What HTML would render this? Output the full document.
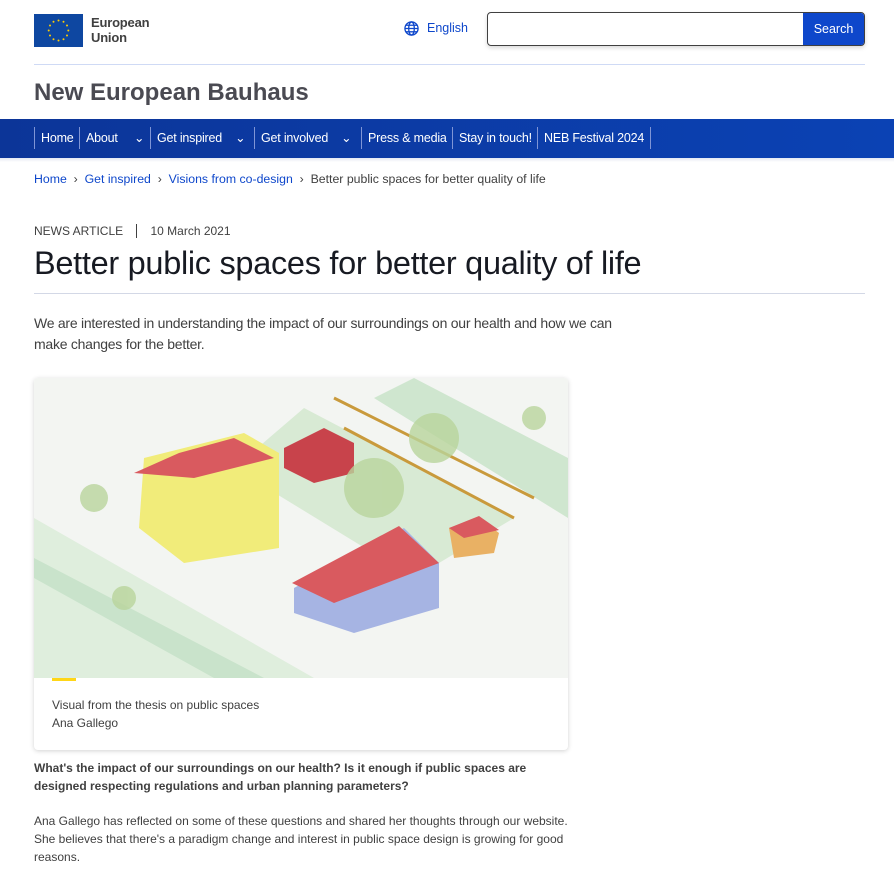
<!DOCTYPE html>
<html><head><meta charset="utf-8"><style>
*{margin:0;padding:0;box-sizing:border-box}
body{width:894px;height:879px;overflow:hidden;background:#fff;font-family:"Liberation Sans",Arial,sans-serif;color:#404040;position:relative}
.abs{position:absolute}
a{color:#0e47cb;text-decoration:none}
.nav span{position:absolute;top:0;height:22px;border-left:1px solid #7f95d6;color:#fff;font-size:12.5px;line-height:22px;padding-left:6px;letter-spacing:-.2px}
</style></head><body>
<div class="abs" style="left:34px;top:14px;width:49px;height:33px;background:#0e47a1">
<svg width="49" height="33"><g fill="#ffcc00">
<circle cx="24.5" cy="6.5" r="1"/><circle cx="29.5" cy="7.8" r="1"/><circle cx="33" cy="11.5" r="1"/><circle cx="34.3" cy="16.5" r="1"/><circle cx="33" cy="21.5" r="1"/><circle cx="29.5" cy="25.2" r="1"/><circle cx="24.5" cy="26.5" r="1"/><circle cx="19.5" cy="25.2" r="1"/><circle cx="16" cy="21.5" r="1"/><circle cx="14.7" cy="16.5" r="1"/><circle cx="16" cy="11.5" r="1"/><circle cx="19.5" cy="7.8" r="1"/></g></svg></div>
<div class="abs" style="left:91px;top:15px;font-size:13px;line-height:15px;color:#404040;font-weight:bold;letter-spacing:-.2px">European<br>Union</div>
<svg class="abs" style="left:404px;top:21px" width="15" height="15" viewBox="0 0 16 16" fill="none" stroke="#0e47cb" stroke-width="1.4"><circle cx="8" cy="8" r="7"/><ellipse cx="8" cy="8" rx="3" ry="7"/><path d="M1 8h14M2 4.5h12M2 11.5h12"/></svg>
<div class="abs" style="left:427px;top:21px;font-size:12.5px;color:#0e47cb">English</div>
<div class="abs" style="left:487px;top:12px;width:378px;height:34px;border:1px solid #404040;border-radius:4px;overflow:hidden;box-shadow:0 2px 4px rgba(0,0,0,.15)">
<div class="abs" style="right:0;top:0;width:61px;height:34px;background:#0e47cb;color:#fff;font-size:12.5px;line-height:32px;text-align:center">Search</div></div>
<div class="abs" style="left:34px;top:64px;width:831px;height:1px;background:#cfdaf5"></div>
<div class="abs" style="left:34px;top:79px;font-size:24px;font-weight:bold;color:#4a4a52">New European Bauhaus</div>
<div class="abs nav" style="left:0;top:119px;width:894px;height:39px;background:linear-gradient(90deg,#0c3598,#0b42b4)">
<div style="position:relative;top:8px">
<span style="left:34px">Home</span><span style="left:79px">About&nbsp;&nbsp;&nbsp;&nbsp;&nbsp;⌄</span><span style="left:150px">Get inspired&nbsp;&nbsp;&nbsp;&nbsp;⌄</span><span style="left:254px">Get involved&nbsp;&nbsp;&nbsp;&nbsp;⌄</span><span style="left:361px">Press &amp; media</span><span style="left:452px">Stay in touch!</span><span style="left:537px;border-right:1px solid #7f95d6;padding-right:6px">NEB Festival 2024</span>
</div></div>
<div class="abs" style="left:0;top:158px;width:894px;height:4px;background:linear-gradient(#e4e8f3,#fff)"></div>
<div class="abs" style="left:34px;top:172px;font-size:12.3px;color:#404040"><a>Home</a>&nbsp;&nbsp;›&nbsp;&nbsp;<a>Get inspired</a>&nbsp;&nbsp;›&nbsp;&nbsp;<a>Visions from co-design</a>&nbsp;&nbsp;›&nbsp;&nbsp;Better public spaces for better quality of life</div>
<div class="abs" style="left:34px;top:224px;font-size:12px;color:#404040">NEWS ARTICLE&nbsp;&nbsp;&nbsp;&nbsp;<span style="border-left:1px solid #404040;padding-left:13px">10 March 2021</span></div>
<div class="abs" style="left:34px;top:245px;font-size:32.5px;color:#171a22;letter-spacing:-.3px">Better public spaces for better quality of life</div>
<div class="abs" style="left:34px;top:293px;width:831px;height:1px;background:#d3d8e6"></div>
<div class="abs" style="left:34px;top:313px;width:600px;font-size:14px;line-height:21px;color:#404040;letter-spacing:-.25px">We are interested in understanding the impact of our surroundings on our health and how we can make changes for the better.</div>
<div class="abs" style="left:34px;top:378px;width:534px;height:372px;border-radius:4px;box-shadow:0 1px 5px rgba(0,0,0,.18);overflow:hidden">
<svg width="534" height="300" style="display:block;background:#f3f5f2">
<polygon points="0,520 0,140 280,300 200,300" fill="#dfeedd"/>
<polygon points="0,180 230,300 180,300 0,200" fill="#c9e3cb"/>
<polygon points="380,0 534,80 534,140 340,20" fill="#cfe6cf"/>
<polygon points="270,30 480,140 380,200 200,90" fill="#d8ead4"/>
<polygon points="110,80 210,55 245,75 245,170 150,185 105,150" fill="#f1ec7a"/>
<polygon points="100,95 145,75 200,60 240,80 160,100" fill="#d95a5f"/>
<polygon points="250,70 290,50 320,65 320,95 280,105 250,90" fill="#c8434b"/>
<polygon points="260,210 370,150 405,185 405,230 320,255 260,235" fill="#a6b4e3"/>
<polygon points="258,205 365,148 405,185 300,225" fill="#d95a5f"/>
<polygon points="415,150 445,140 465,155 460,175 420,180" fill="#e9b164"/>
<polygon points="415,150 445,138 465,152 430,160" fill="#d95a5f"/>
<path d="M300 20 L500 120 M310 50 L480 140" stroke="#c99a3c" stroke-width="3" fill="none"/>
<g fill="#b9d59c" opacity=".8"><circle cx="340" cy="110" r="30"/><circle cx="400" cy="60" r="25"/><circle cx="60" cy="120" r="14"/><circle cx="500" cy="40" r="12"/><circle cx="90" cy="220" r="12"/></g>
</svg>
<div class="abs" style="left:18px;top:300px;width:24px;height:3px;background:#ffd617"></div>
<div class="abs" style="left:18px;top:318px;font-size:12px;line-height:18px;color:#404040">Visual from the thesis on public spaces<br>Ana Gallego</div>
</div>
<div class="abs" style="left:34px;top:759px;width:534px;font-size:12px;line-height:18px;font-weight:bold;color:#404040">What's the impact of our surroundings on our health? Is it enough if public spaces are designed respecting regulations and urban planning parameters?</div>
<div class="abs" style="left:34px;top:812px;width:534px;font-size:12px;line-height:18px;color:#404040">Ana Gallego has reflected on some of these questions and shared her thoughts through our website. She believes that there's a paradigm change and interest in public space design is growing for good reasons.</div>
</body></html>
